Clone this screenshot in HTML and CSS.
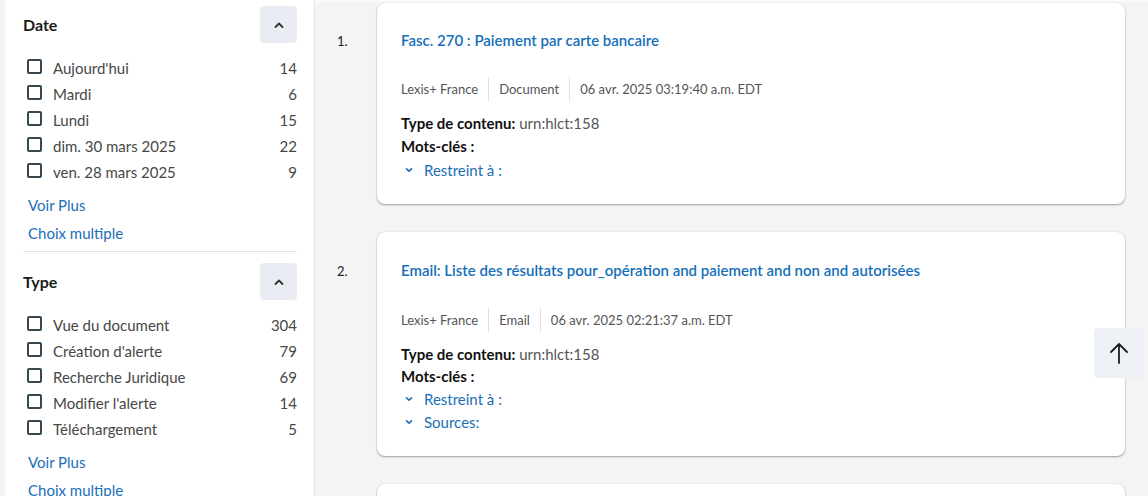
FILE: index.html
```html
<!DOCTYPE html>
<html lang="fr">
<head>
<meta charset="utf-8">
<title>Résultats</title>
<link rel="stylesheet" href="styles.css">
</head>
<body>
<div class="page">
  <aside class="sidebar">
    <section class="facet">
      <div class="facet-head">
        <h2 class="facet-title">Date</h2>
        <button class="collapse-btn" aria-label="Réduire"><svg width="12" height="8" viewBox="0 0 12 8"><path d="M2.5 6 L6 2.5 L9.5 6" fill="none" stroke="#333" stroke-width="1.8" stroke-linecap="round" stroke-linejoin="round"/></svg></button>
      </div>
      <ul class="facet-list">
        <li class="facet-row"><span class="cb"></span><span class="facet-label">Aujourd'hui</span><span class="facet-count">14</span></li>
        <li class="facet-row"><span class="cb"></span><span class="facet-label">Mardi</span><span class="facet-count">6</span></li>
        <li class="facet-row"><span class="cb"></span><span class="facet-label">Lundi</span><span class="facet-count">15</span></li>
        <li class="facet-row"><span class="cb"></span><span class="facet-label">dim. 30 mars 2025</span><span class="facet-count">22</span></li>
        <li class="facet-row"><span class="cb"></span><span class="facet-label">ven. 28 mars 2025</span><span class="facet-count">9</span></li>
      </ul>
      <a class="facet-link" href="#">Voir Plus</a>
      <a class="facet-link" href="#">Choix multiple</a>
    </section>
    <section class="facet facet-second">
      <div class="facet-head">
        <h2 class="facet-title">Type</h2>
        <button class="collapse-btn" aria-label="Réduire"><svg width="12" height="8" viewBox="0 0 12 8"><path d="M2.5 6 L6 2.5 L9.5 6" fill="none" stroke="#333" stroke-width="1.8" stroke-linecap="round" stroke-linejoin="round"/></svg></button>
      </div>
      <ul class="facet-list">
        <li class="facet-row"><span class="cb"></span><span class="facet-label">Vue du document</span><span class="facet-count">304</span></li>
        <li class="facet-row"><span class="cb"></span><span class="facet-label">Création d'alerte</span><span class="facet-count">79</span></li>
        <li class="facet-row"><span class="cb"></span><span class="facet-label">Recherche Juridique</span><span class="facet-count">69</span></li>
        <li class="facet-row"><span class="cb"></span><span class="facet-label">Modifier l'alerte</span><span class="facet-count">14</span></li>
        <li class="facet-row"><span class="cb"></span><span class="facet-label">Téléchargement</span><span class="facet-count">5</span></li>
      </ul>
      <a class="facet-link" href="#">Voir Plus</a>
      <a class="facet-link" href="#">Choix multiple</a>
    </section>
  </aside>

  <main class="results">
    <ol class="result-list">
      <li class="result">
        <span class="result-num">1.</span>
        <article class="card">
          <a class="card-title" href="#">Fasc. 270 : Paiement par carte bancaire</a>
          <div class="meta">
            <span class="meta-item">Lexis+ France</span>
            <span class="meta-item">Document</span>
            <span class="meta-item">06 avr. 2025 03:19:40 a.m. EDT</span>
          </div>
          <div class="field"><strong>Type de contenu:</strong> <span class="field-val">urn:hlct:158</span></div>
          <div class="field"><strong>Mots-clés :</strong></div>
          <div class="toggle"><svg class="chev" width="8" height="6" viewBox="0 0 8 6"><path d="M1.5 1.8 L4 4.2 L6.5 1.8" fill="none" stroke="#1a6fb7" stroke-width="1.6" stroke-linecap="round" stroke-linejoin="round"/></svg><span>Restreint à :</span></div>
        </article>
      </li>
      <li class="result result-second">
        <span class="result-num">2.</span>
        <article class="card">
          <a class="card-title" href="#">Email: Liste des résultats pour_opération and paiement and non and autorisées</a>
          <div class="meta">
            <span class="meta-item">Lexis+ France</span>
            <span class="meta-item">Email</span>
            <span class="meta-item">06 avr. 2025 02:21:37 a.m. EDT</span>
          </div>
          <div class="field"><strong>Type de contenu:</strong> <span class="field-val">urn:hlct:158</span></div>
          <div class="field"><strong>Mots-clés :</strong></div>
          <div class="toggle"><svg class="chev" width="8" height="6" viewBox="0 0 8 6"><path d="M1.5 1.8 L4 4.2 L6.5 1.8" fill="none" stroke="#1a6fb7" stroke-width="1.6" stroke-linecap="round" stroke-linejoin="round"/></svg><span>Restreint à :</span></div>
          <div class="toggle"><svg class="chev" width="8" height="6" viewBox="0 0 8 6"><path d="M1.5 1.8 L4 4.2 L6.5 1.8" fill="none" stroke="#1a6fb7" stroke-width="1.6" stroke-linecap="round" stroke-linejoin="round"/></svg><span>Sources:</span></div>
        </article>
      </li>
      <li class="result">
        <span class="result-num"></span>
        <article class="card card-partial"></article>
      </li>
    </ol>
    <button class="to-top" aria-label="Haut de page"><svg width="22" height="24" viewBox="0 0 22 24"><path d="M11 22 V3 M3 11 L11 3 L19 11" fill="none" stroke="#1d1d1d" stroke-width="1.8" stroke-linecap="round" stroke-linejoin="round"/></svg></button>
  </main>
</div>
</body>
</html>
```

FILE: styles.css
```css
* { box-sizing: border-box; }
html, body { margin: 0; padding: 0; }
body {
  width: 1148px;
  height: 496px;
  overflow: hidden;
  background: #f4f4f4;
  font-family: Lato, "Open Sans", "Liberation Sans", sans-serif;
  color: #454545;
}
.page {
  display: flex;
  height: 496px;
  padding-left: 5px;
}
.sidebar {
  width: 310px;
  flex: none;
  background: #fff;
  border-right: 1px solid #e6e6e6;
  padding: 0 17px 0 18px;
  overflow: hidden;
}
.facet { padding-top: 6px; }
.facet-second {
  border-top: 1px solid #e2e2e2;
  margin-top: 4px;
  padding-top: 11px;
}
.facet-head {
  display: flex;
  align-items: center;
  justify-content: space-between;
  height: 37px;
}
.facet-title {
  margin: -1px 0 0;
  font-size: 16px;
  font-weight: 700;
  color: #1b1b1b;
}
.collapse-btn {
  width: 37px;
  height: 37px;
  border: 0;
  border-radius: 4px;
  background: #e9edf3;
  display: flex;
  align-items: center;
  justify-content: center;
  padding: 0;
}
.facet-list {
  list-style: none;
  margin: 12px 0 0;
  padding: 0;
}
.facet-row {
  display: flex;
  align-items: center;
  height: 26px;
  font-size: 15px;
  color: #474747;
  padding-left: 4px;
}
.cb {
  width: 15px;
  height: 15px;
  border: 2px solid #37474f;
  border-radius: 2px;
  flex: none;
  margin-right: 11px;
  margin-top: -3px;
}
.facet-label { flex: 1; }
.facet-count { text-align: right; }
.facet-link {
  display: block;
  height: 28px;
  line-height: 28px;
  font-size: 15px;
  color: #1a6fb7;
  text-decoration: none;
  padding-left: 5px;
}
.facet-list + .facet-link { margin-top: 6px; }

.results {
  flex: 1;
  position: relative;
  border-top: 2px solid #fafafa;
  padding-top: 1px;
}
.result-list {
  list-style: none;
  margin: 0;
  padding: 0 23px 0 0;
  display: flex;
  flex-direction: column;
  gap: 28px;
}
.result {
  display: flex;
  align-items: flex-start;
}
.result-num {
  width: 62px;
  flex: none;
  padding-left: 22px;
  padding-top: 28px;
  font-size: 13px;
  color: #222;
  line-height: 20px;
}
.card {
  flex: 1;
  background: #fff;
  border-radius: 8px;
  box-shadow: 0 1px 2px rgba(0,0,0,0.35), 0 0 1px rgba(0,0,0,0.2);
  padding: 27px 24px 23px;
}
.result-second .card { padding-top: 28px; }
.result-second .result-num { padding-top: 29px; }
.result-second .meta { margin-top: 28px; }
.result-second .field { height: 22px; line-height: 22px; }
.card-partial { height: 60px; }
.card-title {
  display: block;
  font-size: 15px;
  line-height: 20px;
  font-weight: 600;
  color: #156fbb;
  text-decoration: none;
}
.meta {
  display: flex;
  margin-top: 27px;
  margin-bottom: 11px;
  height: 24px;
  font-size: 13px;
  color: #555;
}
.meta-item {
  display: flex;
  align-items: center;
  padding: 0 10px;
  border-left: 1px solid #e0e0e0;
}
.meta-item:first-child { padding-left: 0; border-left: 0; }
.field {
  height: 23px;
  line-height: 23px;
  font-size: 15px;
}
.field strong { color: #111; font-weight: 700; }
.field-val { color: #555; }
.toggle {
  display: flex;
  align-items: center;
  height: 23px;
  font-size: 15px;
  color: #1a6fb7;
}
.chev { margin: 0 11px 0 4px; }
.to-top {
  position: absolute;
  left: 779px;
  top: 326px;
  width: 50px;
  height: 50px;
  border: 0;
  border-radius: 4px;
  background: #eef1f6;
  padding: 0;
  display: flex;
  align-items: center;
  justify-content: center;
}
```
